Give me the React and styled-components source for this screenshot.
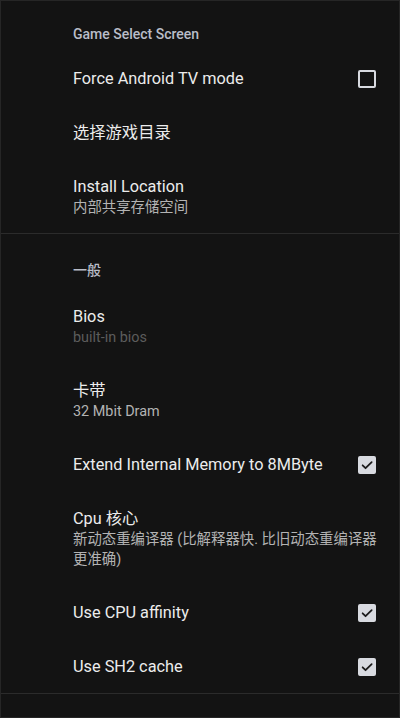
import React from 'react';
import styled, {createGlobalStyle} from 'styled-components';

const GlobalStyle = createGlobalStyle`
  html, body {
    margin: 0;
    padding: 0;
    background: #131313;
  }
  * {
    box-sizing: border-box;
  }
`;

const Screen = styled.div`
  width: 400px;
  height: 718px;
  overflow: hidden;
  background: #131313;
  border: 1px solid #262626;
  font-family: Roboto, "Noto Sans CJK SC", sans-serif;
  -webkit-font-smoothing: antialiased;
`;

const Header = styled.div`
  padding: ${p => p.top}px 22px ${p => p.bottom}px 72px;
  font-size: 14px;
  line-height: 18px;
  font-weight: 500;
  color: #b9bdc8;
`;

const Row = styled.div`
  display: flex;
  align-items: center;
  min-height: 54px;
  padding: ${p => (p.twoLine ? '17px 22px 15px 72px' : '1px 22px 0 72px')};
  gap: 12px;
`;

const Texts = styled.div`
  flex: 1;
  min-width: 0;
`;

const Title = styled.div`
  font-size: 16.3px;
  line-height: 22px;
  color: #ececec;
`;

const Summary = styled.div`
  font-size: 14.4px;
  line-height: 20px;
  color: ${p => (p.dim ? '#5c5c5c' : '#b3b3b3')};
`;

const Box = styled.div`
  flex: none;
  width: 18px;
  height: 18px;
  border-radius: 2px;
  border: 2px solid #d8dae0;
  background: ${p => (p.checked ? '#d8dae0' : 'transparent')};
  display: flex;
  align-items: center;
  justify-content: center;
  margin-right: 1px;
`;

const Divider = styled.div`
  height: 1px;
  background: #2b2b2b;
`;

function Checkbox({checked}) {
    return (
        <Box checked={checked}>
            {checked && (
                <svg width="14" height="14" viewBox="0 0 24 24">
                    <path d="M4.5 12.5l5 5L20 7" fill="none" stroke="#1a1a1a" strokeWidth="3" strokeLinecap="round" strokeLinejoin="round"/>
                </svg>
            )}
        </Box>
    );
}

function Pref({title, summary, dim, check}) {
    return (
        <Row twoLine={!!summary}>
            <Texts>
                <Title>{title}</Title>
                {summary && <Summary dim={dim}>{summary}</Summary>}
            </Texts>
            {check !== undefined && <Checkbox checked={check}/>}
        </Row>
    );
}

export default function App() {
    return (
        <>
            <GlobalStyle/>
            <Screen>
                <Header top={24} bottom={8}>Game Select Screen</Header>
                <Pref title="Force Android TV mode" check={false}/>
                <Pref title="选择游戏目录"/>
                <Pref title="Install Location" summary="内部共享存储空间"/>
                <Divider/>
                <Header top={27} bottom={10}>一般</Header>
                <Pref title="Bios" summary="built-in bios" dim/>
                <Pref title="卡带" summary="32 Mbit Dram"/>
                <Pref title="Extend Internal Memory to 8MByte" check={true}/>
                <Pref title="Cpu 核心" summary="新动态重编译器 (比解释器快. 比旧动态重编译器更准确)"/>
                <Pref title="Use CPU affinity" check={true}/>
                <Pref title="Use SH2 cache" check={true}/>
                <Divider/>
            </Screen>
        </>
    );
}
